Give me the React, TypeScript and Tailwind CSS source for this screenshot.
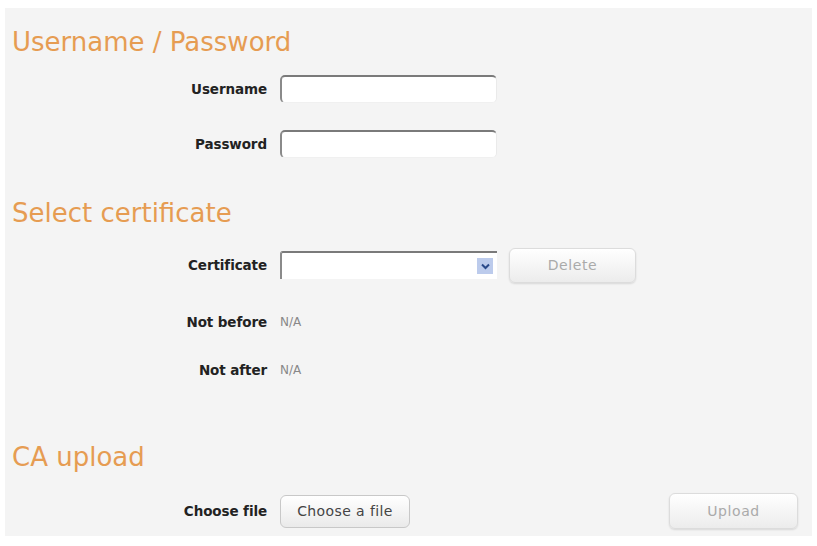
import React from "react";

const font = { fontFamily: '"DejaVu Sans", Verdana, sans-serif' };

function Label({ children }: { children: React.ReactNode }) {
  return (
    <div className="w-[262px] text-right text-[13.5px] font-bold text-[#222] shrink-0 tracking-[-0.1px]">
      {children}
    </div>
  );
}

function TextInput() {
  return (
    <div className="w-[217px] h-[28px] bg-white rounded-[5px] border-t-2 border-l-2 border-t-[#7a7a7a] border-l-[#8a8a8a] border-r border-b border-r-[#eaeaea] border-b-[#f0f0f0]" />
  );
}

function Button({ label, w }: { label: string; w: string }) {
  return (
    <div
      className={`${w} rounded-[6px] border border-[#dcdcdc] bg-gradient-to-b from-white to-[#ececec] shadow-[0_1px_2px_rgba(0,0,0,0.12)] flex items-center justify-center text-[14px] tracking-[0.6px] text-[#aaa]`}
    >
      {label}
    </div>
  );
}

export default function App() {
  return (
    <div className="w-[817px] h-[546px] bg-white pt-[8px] px-[5px] pb-[10px]" style={font}>
      <div className="h-full bg-[#f4f4f4] flex flex-col">
        <div className="h-[19px]" />
        <div className="pl-[7px] h-[30px] text-[26px] leading-[30px] text-[#e69c52]">Username / Password</div>
        <div className="h-[18px]" />
        <div className="flex items-center h-[28px]">
          <Label>Username</Label>
          <div className="ml-[13px]"><TextInput /></div>
        </div>
        <div className="h-[27px]" />
        <div className="flex items-center h-[28px]">
          <Label>Password</Label>
          <div className="ml-[13px]"><TextInput /></div>
        </div>
        <div className="h-[40px]" />
        <div className="pl-[7px] h-[30px] text-[26px] leading-[30px] text-[#e69c52]">Select certificate</div>
        <div className="h-[19px]" />
        <div className="flex items-center h-[36px]">
          <Label>Certificate</Label>
          <div className="ml-[13px] relative w-[217px] h-[28px] bg-white border-t-2 border-l-2 border-t-[#7a7a7a] border-l-[#8a8a8a] rounded-tl-[3px]">
            <div className="absolute right-[4px] top-[5px] w-[16px] h-[16px] bg-[#bccbec] flex items-center justify-center">
              <svg width="9" height="7" viewBox="0 0 9 7">
                <path d="M1 1.5 L4.5 5 L8 1.5" stroke="#2a4a8a" strokeWidth="2" fill="none" />
              </svg>
            </div>
          </div>
          <div className="ml-[12px]"><Button label="Delete" w="w-[127px] h-[35px]" /></div>
        </div>
        <div className="h-[27px]" />
        <div className="flex items-center h-[24px]">
          <Label>Not before</Label>
          <div className="ml-[13px] text-[12px] text-[#888]">N/A</div>
        </div>
        <div className="h-[24px]" />
        <div className="flex items-center h-[24px]">
          <Label>Not after</Label>
          <div className="ml-[13px] text-[12px] text-[#888]">N/A</div>
        </div>
        <div className="h-[60px]" />
        <div className="pl-[7px] h-[30px] text-[26px] leading-[30px] text-[#e69c52]">CA upload</div>
        <div className="h-[21px]" />
        <div className="flex items-center h-[36px]">
          <Label>Choose file</Label>
          <div className="ml-[13px] w-[130px] h-[33px] rounded-[6px] border border-[#c8c8c8] bg-gradient-to-b from-white to-[#eaeaea] flex items-center justify-center text-[14px] tracking-[0.4px] text-[#444]">
            Choose a file
          </div>
          <div className="ml-auto mr-[14px]"><Button label="Upload" w="w-[129px] h-[36px]" /></div>
        </div>
      </div>
    </div>
  );
}
